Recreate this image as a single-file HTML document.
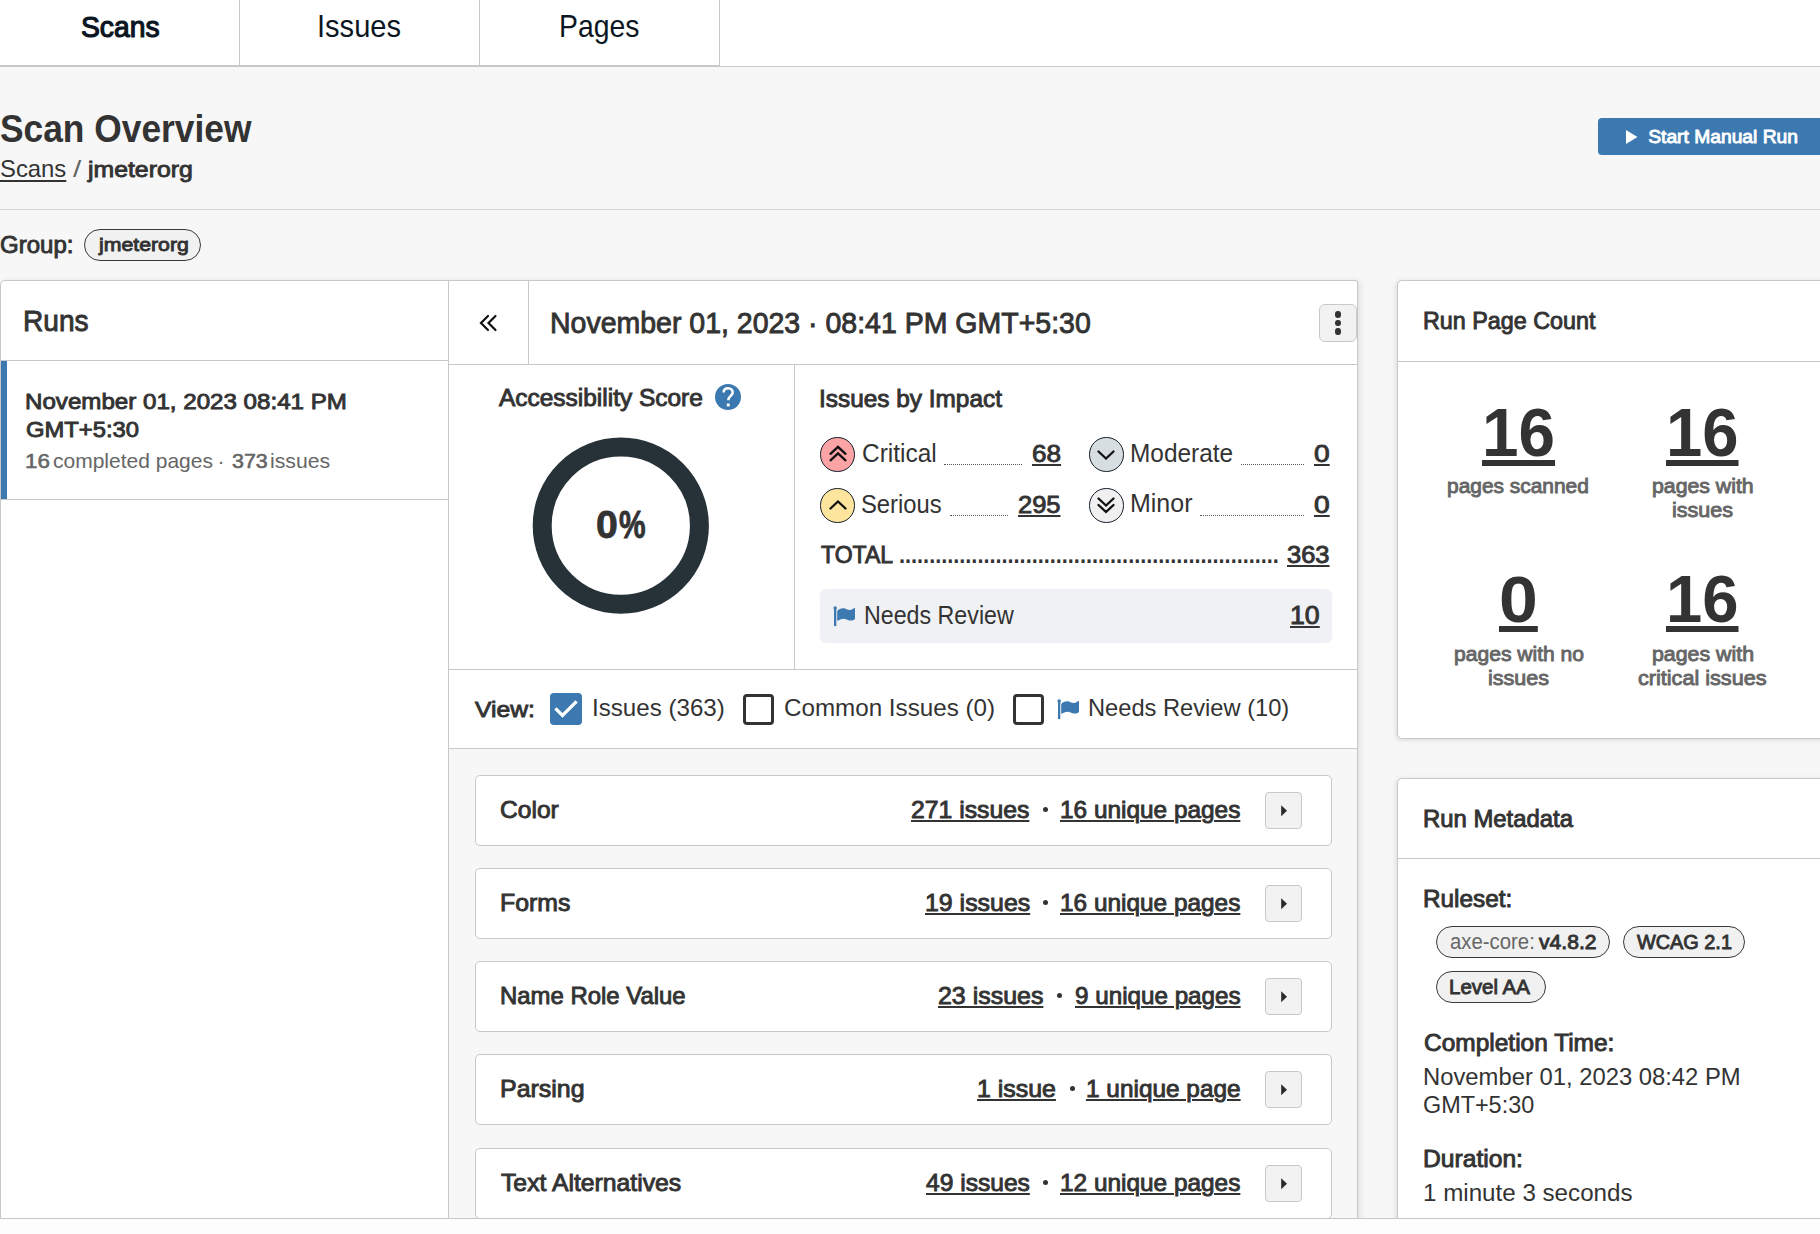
<!DOCTYPE html>
<html><head><meta charset="utf-8"><title>Scan Overview</title>
<style>
html,body{margin:0;padding:0;}
body{width:1820px;height:1234px;overflow:hidden;position:relative;background:#f7f7f7;font-family:'Liberation Sans',sans-serif;}
</style></head><body>
<div style="position:absolute;left:0px;top:0px;width:1820px;height:66px;background:#fff;border-bottom:1px solid #c8c8c8"></div>
<div style="position:absolute;left:0px;top:65px;width:720px;height:1px;background:#c8c8c8"></div>
<div style="position:absolute;left:239px;top:0px;width:1px;height:65px;background:#c8c8c8"></div>
<div style="position:absolute;left:479px;top:0px;width:1px;height:65px;background:#c8c8c8"></div>
<div style="position:absolute;left:719px;top:0px;width:1px;height:65px;background:#c8c8c8"></div>
<div style="position:absolute;left:1598px;top:118px;width:260px;height:36.5px;background:#3c79b0;border-radius:4px"></div>
<svg style="position:absolute;left:0;top:0" width="1820" height="1234"><polygon points="1626,130 1637.5,137 1626,144" fill="#fff"/></svg>
<div style="position:absolute;left:0px;top:209px;width:1820px;height:1px;background:#d4d4d4"></div>
<div style="position:absolute;left:84px;top:229px;width:117px;height:32px;box-sizing:border-box;border:1.5px solid #3a3a3a;border-radius:16px;background:#f1f1f1"></div>
<div style="position:absolute;left:0px;top:280px;width:1358px;height:1000px;box-sizing:border-box;background:#fff;border:1px solid #c8c8c8;border-radius:5px 2px 5px 5px;box-shadow:2px 1px 6px rgba(0,0,0,.10)"></div>
<div style="position:absolute;left:448px;top:281px;width:1px;height:960px;background:#c8c8c8"></div>
<div style="position:absolute;left:1px;top:360px;width:447px;height:1px;background:#c8c8c8"></div>
<div style="position:absolute;left:1px;top:361px;width:6px;height:138px;background:#3c79b0"></div>
<div style="position:absolute;left:1px;top:499px;width:447px;height:1px;background:#c8c8c8"></div>
<div style="position:absolute;left:528px;top:281px;width:1px;height:83px;background:#c8c8c8"></div>
<div style="position:absolute;left:449px;top:364px;width:908px;height:1px;background:#c8c8c8"></div>
<svg style="position:absolute;left:478px;top:313px" width="20" height="20" viewBox="0 0 20 20"><path d="M10 3 L3 10 L10 17 M17.5 3 L10.5 10 L17.5 17" fill="none" stroke="#111" stroke-width="2.2" stroke-linecap="round" stroke-linejoin="miter"/></svg>
<div style="position:absolute;left:1319px;top:304px;width:38px;height:38px;box-sizing:border-box;background:#f2f2f2;border:1px solid #c8c8c8;border-radius:6px"></div>
<div style="position:absolute;left:1335px;top:311.2px;width:6px;height:6.5px;border-radius:45%;background:#333"></div>
<div style="position:absolute;left:1335px;top:319.7px;width:6px;height:6.5px;border-radius:45%;background:#333"></div>
<div style="position:absolute;left:1335px;top:328.2px;width:6px;height:6.5px;border-radius:45%;background:#333"></div>
<div style="position:absolute;left:794px;top:365px;width:1px;height:304px;background:#c8c8c8"></div>
<div style="position:absolute;left:449px;top:669px;width:908px;height:1px;background:#c8c8c8"></div>
<div style="position:absolute;left:715px;top:384px;width:26px;height:26px;border-radius:50%;background:#3c79b0"></div>
<svg style="position:absolute;left:0;top:0" width="1820" height="1234"><path d="M723.6 392.6 C723.6 389.6 725.6 388.3 728.1 388.3 C730.8 388.3 732.7 390.1 732.7 392.5 C732.7 395.6 728.3 396.4 728.3 400.2" fill="none" stroke="#fff" stroke-width="2.5"/><rect x="726.8" y="403.5" width="2.9" height="2.9" fill="#fff"/></svg>
<svg style="position:absolute;left:0;top:0" width="1820" height="1234"><circle cx="620.8" cy="525.7" r="78.6" fill="none" stroke="#263238" stroke-width="19"/></svg>
<div style="position:absolute;left:820.2px;top:437.09999999999997px;width:34.6px;height:34.6px;box-sizing:border-box;border-radius:50%;background:#fba3a5;border:1.6px solid #16202a"></div>
<svg style="position:absolute;left:825.5px;top:442.4px" width="24" height="24" viewBox="-12 -12 24 24"><path transform="translate(0 -0.7)" d="M-7.5 0.5 L0 -6.5 L7.5 0.5 M-7.5 7 L0 0 L7.5 7" fill="none" stroke="#111" stroke-width="2.3" stroke-linecap="round"/></svg>
<div style="position:absolute;left:820.2px;top:488.09999999999997px;width:34.6px;height:34.6px;box-sizing:border-box;border-radius:50%;background:#fde59e;border:1.6px solid #16202a"></div>
<svg style="position:absolute;left:825.5px;top:493.4px" width="24" height="24" viewBox="-12 -12 24 24"><path transform="translate(0 0)" d="M-7.5 3.5 L0 -3.5 L7.5 3.5" fill="none" stroke="#111" stroke-width="2.3" stroke-linecap="round"/></svg>
<div style="position:absolute;left:1089.0px;top:437.2px;width:34.6px;height:34.6px;box-sizing:border-box;border-radius:50%;background:#d6dee2;border:1.6px solid #16202a"></div>
<svg style="position:absolute;left:1094.3px;top:442.5px" width="24" height="24" viewBox="-12 -12 24 24"><path transform="translate(0 0)" d="M-7.5 -3.5 L0 3.5 L7.5 -3.5" fill="none" stroke="#111" stroke-width="2.3" stroke-linecap="round"/></svg>
<div style="position:absolute;left:1089.0px;top:488.09999999999997px;width:34.6px;height:34.6px;box-sizing:border-box;border-radius:50%;background:#f0f0f0;border:1.6px solid #16202a"></div>
<svg style="position:absolute;left:1094.3px;top:493.4px" width="24" height="24" viewBox="-12 -12 24 24"><path transform="translate(0 0.5)" d="M-7.5 -7 L0 0 L7.5 -7 M-7.5 -0.5 L0 6.5 L7.5 -0.5" fill="none" stroke="#111" stroke-width="2.3" stroke-linecap="round"/></svg>
<div style="position:absolute;left:944px;top:464px;width:78px;height:1px;border-top:1.5px dotted #555;height:0"></div>
<div style="position:absolute;left:950px;top:515px;width:58px;height:1px;border-top:1.5px dotted #555;height:0"></div>
<div style="position:absolute;left:1241px;top:464px;width:63px;height:1px;border-top:1.5px dotted #555;height:0"></div>
<div style="position:absolute;left:1200px;top:515px;width:104px;height:1px;border-top:1.5px dotted #555;height:0"></div>
<div style="position:absolute;left:820px;top:589px;width:512px;height:54px;background:#f0f1f4;border-radius:6px"></div>
<svg style="position:absolute;left:0px;top:0px;overflow:visible" width="1" height="1"><g fill="#3c79b0"><rect x="834" y="607.5" width="2.3" height="18.6"/><circle cx="835.15" cy="607.9" r="1.7"/><path d="M837.2 611 C839 609 841 608.2 843.5 608.3 C846 608.5 847.5 610.2 850 610 C852 609.8 853.5 608.2 855 608 L855 619 C853.5 620.5 851.5 620.8 849.5 620.5 C847 620 846 618.8 843.5 618.8 C841 618.8 839.5 620.3 837.2 620.8 Z"/></g></svg>
<div style="position:absolute;left:449px;top:748px;width:908px;height:1px;background:#c8c8c8"></div>
<div style="position:absolute;left:550.4px;top:693.3px;width:31.5px;height:31.5px;border-radius:4px;background:#3c79b0"></div>
<svg style="position:absolute;left:550px;top:693px" width="32" height="32" viewBox="0 0 32 32"><path d="M5.4 15.3 L12.5 22.4 L26.6 8.3" fill="none" stroke="#fff" stroke-width="3.3"/></svg>
<div style="position:absolute;left:743px;top:694px;width:31px;height:31px;box-sizing:border-box;border:3px solid #333;border-radius:4px;background:#fff"></div>
<div style="position:absolute;left:1013px;top:694px;width:31px;height:31px;box-sizing:border-box;border:3px solid #333;border-radius:4px;background:#fff"></div>
<svg style="position:absolute;left:224.2px;top:93.2px;overflow:visible" width="1" height="1"><g fill="#3c79b0"><rect x="834" y="607.5" width="2.3" height="18.6"/><circle cx="835.15" cy="607.9" r="1.7"/><path d="M837.2 611 C839 609 841 608.2 843.5 608.3 C846 608.5 847.5 610.2 850 610 C852 609.8 853.5 608.2 855 608 L855 619 C853.5 620.5 851.5 620.8 849.5 620.5 C847 620 846 618.8 843.5 618.8 C841 618.8 839.5 620.3 837.2 620.8 Z"/></g></svg>
<div style="position:absolute;left:449px;top:749px;width:908px;height:520px;background:#f7f7f7"></div>
<div style="position:absolute;left:475px;top:775px;width:857px;height:71px;box-sizing:border-box;background:#fff;border:1px solid #c8c8c8;border-radius:5px"></div>
<div style="position:absolute;left:1043.0px;top:806.5px;width:5px;height:5px;border-radius:50%;background:#333"></div>
<div style="position:absolute;left:1265px;top:792px;width:37px;height:37px;box-sizing:border-box;background:#f2f2f2;border:1px solid #c8c8c8;border-radius:4px"></div>
<svg style="position:absolute;left:1277px;top:804px" width="14" height="14" viewBox="0 0 14 14"><polygon points="4.2,1.3 10,6.8 4.2,12.3" fill="#2a2a2a"/></svg>
<div style="position:absolute;left:475px;top:868px;width:857px;height:71px;box-sizing:border-box;background:#fff;border:1px solid #c8c8c8;border-radius:5px"></div>
<div style="position:absolute;left:1043.0px;top:899.5px;width:5px;height:5px;border-radius:50%;background:#333"></div>
<div style="position:absolute;left:1265px;top:885px;width:37px;height:37px;box-sizing:border-box;background:#f2f2f2;border:1px solid #c8c8c8;border-radius:4px"></div>
<svg style="position:absolute;left:1277px;top:897px" width="14" height="14" viewBox="0 0 14 14"><polygon points="4.2,1.3 10,6.8 4.2,12.3" fill="#2a2a2a"/></svg>
<div style="position:absolute;left:475px;top:961px;width:857px;height:71px;box-sizing:border-box;background:#fff;border:1px solid #c8c8c8;border-radius:5px"></div>
<div style="position:absolute;left:1056.5px;top:992.5px;width:5px;height:5px;border-radius:50%;background:#333"></div>
<div style="position:absolute;left:1265px;top:978px;width:37px;height:37px;box-sizing:border-box;background:#f2f2f2;border:1px solid #c8c8c8;border-radius:4px"></div>
<svg style="position:absolute;left:1277px;top:990px" width="14" height="14" viewBox="0 0 14 14"><polygon points="4.2,1.3 10,6.8 4.2,12.3" fill="#2a2a2a"/></svg>
<div style="position:absolute;left:475px;top:1054px;width:857px;height:71px;box-sizing:border-box;background:#fff;border:1px solid #c8c8c8;border-radius:5px"></div>
<div style="position:absolute;left:1069.5px;top:1085.5px;width:5px;height:5px;border-radius:50%;background:#333"></div>
<div style="position:absolute;left:1265px;top:1071px;width:37px;height:37px;box-sizing:border-box;background:#f2f2f2;border:1px solid #c8c8c8;border-radius:4px"></div>
<svg style="position:absolute;left:1277px;top:1083px" width="14" height="14" viewBox="0 0 14 14"><polygon points="4.2,1.3 10,6.8 4.2,12.3" fill="#2a2a2a"/></svg>
<div style="position:absolute;left:475px;top:1148px;width:857px;height:71px;box-sizing:border-box;background:#fff;border:1px solid #c8c8c8;border-radius:5px"></div>
<div style="position:absolute;left:1043.0px;top:1179.5px;width:5px;height:5px;border-radius:50%;background:#333"></div>
<div style="position:absolute;left:1265px;top:1165px;width:37px;height:37px;box-sizing:border-box;background:#f2f2f2;border:1px solid #c8c8c8;border-radius:4px"></div>
<svg style="position:absolute;left:1277px;top:1177px" width="14" height="14" viewBox="0 0 14 14"><polygon points="4.2,1.3 10,6.8 4.2,12.3" fill="#2a2a2a"/></svg>
<div style="position:absolute;left:1397px;top:280px;width:500px;height:459px;box-sizing:border-box;background:#fff;border:1px solid #c8c8c8;border-radius:5px;box-shadow:-1px 1px 5px rgba(0,0,0,.12)"></div>
<div style="position:absolute;left:1398px;top:361px;width:430px;height:1px;background:#c8c8c8"></div>
<div style="position:absolute;left:1397px;top:778px;width:500px;height:600px;box-sizing:border-box;background:#fff;border:1px solid #c8c8c8;border-radius:5px;box-shadow:-1px 1px 5px rgba(0,0,0,.12)"></div>
<div style="position:absolute;left:1398px;top:858px;width:430px;height:1px;background:#c8c8c8"></div>
<div style="position:absolute;left:1436px;top:926px;width:174px;height:32px;box-sizing:border-box;border:1.5px solid #3a3a3a;border-radius:16px;background:#f1f1f1"></div>
<div style="position:absolute;left:1623px;top:926px;width:122px;height:32px;box-sizing:border-box;border:1.5px solid #3a3a3a;border-radius:16px;background:#f1f1f1"></div>
<div style="position:absolute;left:1436px;top:971px;width:110px;height:32px;box-sizing:border-box;border:1.5px solid #3a3a3a;border-radius:16px;background:#f1f1f1"></div>
<div style="position:absolute;left:80.52px;top:13.00px;-webkit-text-stroke:1.2px #0b1622;font:400 29.0px/29.0px 'Liberation Sans',sans-serif;color:#0b1622;white-space:pre;transform:scaleX(0.9748);transform-origin:0 0;">Scans</div>
<div style="position:absolute;left:317.33px;top:11.25px;font:400 30.5px/30.5px 'Liberation Sans',sans-serif;color:#0b1622;white-space:pre;transform:scaleX(0.9527);transform-origin:0 0;">Issues</div>
<div style="position:absolute;left:558.58px;top:11.25px;font:400 30.5px/30.5px 'Liberation Sans',sans-serif;color:#0b1622;white-space:pre;transform:scaleX(0.9297);transform-origin:0 0;">Pages</div>
<div style="position:absolute;left:0.45px;top:108.68px;font:700 39.25px/39.25px 'Liberation Sans',sans-serif;color:#333;white-space:pre;transform:scaleX(0.9003);transform-origin:0 0;">Scan Overview</div>
<div style="position:absolute;left:-0.49px;top:156.50px;font:400 24.0px/24.0px 'Liberation Sans',sans-serif;color:#333;white-space:pre;transform:scaleX(0.9938);transform-origin:0 0;text-decoration:underline;text-decoration-thickness:1.5px;text-underline-offset:3px">Scans</div>
<div style="position:absolute;left:72.50px;top:156.50px;font:400 24.0px/24.0px 'Liberation Sans',sans-serif;color:#666;white-space:pre;transform:scaleX(1.2388);transform-origin:0 0;">/</div>
<div style="position:absolute;left:88.05px;top:157.62px;-webkit-text-stroke:0.9px #333;font:400 22.75px/22.75px 'Liberation Sans',sans-serif;color:#333;white-space:pre;transform:scaleX(1.0899);transform-origin:0 0;">jmeterorg</div>
<div style="position:absolute;left:1648.20px;top:126.78px;-webkit-text-stroke:0.9px #fff;font:400 19.25px/19.25px 'Liberation Sans',sans-serif;color:#fff;white-space:pre;">Start Manual Run</div>
<div style="position:absolute;left:-0.32px;top:233.95px;-webkit-text-stroke:0.9px #333;font:400 23.5px/23.5px 'Liberation Sans',sans-serif;color:#333;white-space:pre;transform:scaleX(1.0217);transform-origin:0 0;">Group:</div>
<div style="position:absolute;left:99.15px;top:235.28px;-webkit-text-stroke:0.9px #333;font:400 19.25px/19.25px 'Liberation Sans',sans-serif;color:#333;white-space:pre;transform:scaleX(1.1042);transform-origin:0 0;">jmeterorg</div>
<div style="position:absolute;left:22.81px;top:306.88px;-webkit-text-stroke:0.9px #333;font:400 29.25px/29.25px 'Liberation Sans',sans-serif;color:#333;white-space:pre;transform:scaleX(0.9603);transform-origin:0 0;">Runs</div>
<div style="position:absolute;left:25.09px;top:389.62px;-webkit-text-stroke:0.9px #333;font:400 22.75px/22.75px 'Liberation Sans',sans-serif;color:#333;white-space:pre;transform:scaleX(1.0605);transform-origin:0 0;">November 01, 2023 08:41 PM</div>
<div style="position:absolute;left:25.85px;top:417.93px;-webkit-text-stroke:0.9px #333;font:400 22.75px/22.75px 'Liberation Sans',sans-serif;color:#333;white-space:pre;transform:scaleX(1.0456);transform-origin:0 0;">GMT+5:30</div>
<div style="position:absolute;left:25.32px;top:450.50px;-webkit-text-stroke:0.9px #666;font:400 20.0px/20.0px 'Liberation Sans',sans-serif;color:#666;white-space:pre;transform:scaleX(1.1193);transform-origin:0 0;-webkit-text-stroke-width:0.6px">16</div>
<div style="position:absolute;left:53.00px;top:449.50px;font:400 21.0px/21.0px 'Liberation Sans',sans-serif;color:#666;white-space:pre;">completed pages</div>
<div style="position:absolute;left:217.55px;top:449.50px;font:400 21.0px/21.0px 'Liberation Sans',sans-serif;color:#666;white-space:pre;">·</div>
<div style="position:absolute;left:231.75px;top:450.50px;-webkit-text-stroke:0.9px #666;font:400 20.0px/20.0px 'Liberation Sans',sans-serif;color:#666;white-space:pre;transform:scaleX(1.0708);transform-origin:0 0;-webkit-text-stroke-width:0.6px">373</div>
<div style="position:absolute;left:270.28px;top:449.50px;font:400 21.0px/21.0px 'Liberation Sans',sans-serif;color:#666;white-space:pre;transform:scaleX(1.0118);transform-origin:0 0;">issues</div>
<div style="position:absolute;left:550.47px;top:308.88px;-webkit-text-stroke:0.9px #333;font:400 29.25px/29.25px 'Liberation Sans',sans-serif;color:#333;white-space:pre;transform:scaleX(0.9739);transform-origin:0 0;">November 01, 2023 · 08:41 PM GMT+5:30</div>
<div style="position:absolute;left:499.20px;top:387.20px;-webkit-text-stroke:0.9px #333;font:400 23.0px/23.0px 'Liberation Sans',sans-serif;color:#333;white-space:pre;transform:scaleX(1.0633);transform-origin:0 0;">Accessibility Score</div>
<div style="position:absolute;left:596.27px;top:505.15px;font:700 39.5px/39.5px 'Liberation Sans',sans-serif;color:#333;white-space:pre;transform:scaleX(0.9931);transform-origin:0 0;-webkit-text-stroke:0.8px #333">0</div>
<div style="position:absolute;left:619.23px;top:505.15px;font:700 39.5px/39.5px 'Liberation Sans',sans-serif;color:#333;white-space:pre;transform:scaleX(0.7571);transform-origin:0 0;-webkit-text-stroke:0.9px #333">%</div>
<div style="position:absolute;left:818.82px;top:387.65px;-webkit-text-stroke:0.9px #333;font:400 23.5px/23.5px 'Liberation Sans',sans-serif;color:#333;white-space:pre;transform:scaleX(1.0374);transform-origin:0 0;">Issues by Impact</div>
<div style="position:absolute;left:861.85px;top:440.75px;font:400 25.5px/25.5px 'Liberation Sans',sans-serif;color:#333;white-space:pre;transform:scaleX(0.9593);transform-origin:0 0;">Critical</div>
<div style="position:absolute;left:1031.71px;top:441.88px;-webkit-text-stroke:0.9px #333;font:400 24.25px/24.25px 'Liberation Sans',sans-serif;color:#333;white-space:pre;transform:scaleX(1.0772);transform-origin:0 0;text-decoration:underline;text-decoration-thickness:2px;text-underline-offset:2px">68</div>
<div style="position:absolute;left:861.37px;top:491.55px;font:400 25.5px/25.5px 'Liberation Sans',sans-serif;color:#333;white-space:pre;transform:scaleX(0.9324);transform-origin:0 0;">Serious</div>
<div style="position:absolute;left:1018.24px;top:492.67px;-webkit-text-stroke:0.9px #333;font:400 24.25px/24.25px 'Liberation Sans',sans-serif;color:#333;white-space:pre;transform:scaleX(1.0503);transform-origin:0 0;text-decoration:underline;text-decoration-thickness:2px;text-underline-offset:2px">295</div>
<div style="position:absolute;left:1129.69px;top:440.75px;font:400 25.5px/25.5px 'Liberation Sans',sans-serif;color:#333;white-space:pre;transform:scaleX(0.9566);transform-origin:0 0;">Moderate</div>
<div style="position:absolute;left:1313.95px;top:441.88px;-webkit-text-stroke:0.9px #333;font:400 24.25px/24.25px 'Liberation Sans',sans-serif;color:#333;white-space:pre;transform:scaleX(1.1624);transform-origin:0 0;text-decoration:underline;text-decoration-thickness:2px;text-underline-offset:2px">0</div>
<div style="position:absolute;left:1129.64px;top:491.45px;font:400 25.5px/25.5px 'Liberation Sans',sans-serif;color:#333;white-space:pre;transform:scaleX(0.9793);transform-origin:0 0;">Minor</div>
<div style="position:absolute;left:1313.95px;top:492.58px;-webkit-text-stroke:0.9px #333;font:400 24.25px/24.25px 'Liberation Sans',sans-serif;color:#333;white-space:pre;transform:scaleX(1.1624);transform-origin:0 0;text-decoration:underline;text-decoration-thickness:2px;text-underline-offset:2px">0</div>
<div style="position:absolute;left:820.51px;top:544.35px;-webkit-text-stroke:0.9px #333;font:400 23.5px/23.5px 'Liberation Sans',sans-serif;color:#333;white-space:pre;transform:scaleX(0.9793);transform-origin:0 0;">TOTAL</div>
<div style="position:absolute;left:898.60px;top:542.92px;font:700 24.75px/24.75px 'Liberation Sans',sans-serif;color:#333;white-space:pre;transform:scaleX(0.8769);transform-origin:0 0;">...............................................................</div>
<div style="position:absolute;left:1287.13px;top:544.05px;-webkit-text-stroke:0.9px #333;font:400 23.5px/23.5px 'Liberation Sans',sans-serif;color:#333;white-space:pre;transform:scaleX(1.0844);transform-origin:0 0;text-decoration:underline;text-decoration-thickness:2px;text-underline-offset:2px">363</div>
<div style="position:absolute;left:863.79px;top:602.38px;font:400 26.25px/26.25px 'Liberation Sans',sans-serif;color:#333;white-space:pre;transform:scaleX(0.8847);transform-origin:0 0;">Needs Review</div>
<div style="position:absolute;left:1289.97px;top:603.00px;-webkit-text-stroke:0.9px #333;font:400 25.0px/25.0px 'Liberation Sans',sans-serif;color:#333;white-space:pre;transform:scaleX(1.0678);transform-origin:0 0;text-decoration:underline;text-decoration-thickness:2px;text-underline-offset:2px">10</div>
<div style="position:absolute;left:474.89px;top:697.52px;-webkit-text-stroke:0.9px #333;font:400 22.75px/22.75px 'Liberation Sans',sans-serif;color:#333;white-space:pre;transform:scaleX(1.0829);transform-origin:0 0;">View:</div>
<div style="position:absolute;left:592.19px;top:696.40px;font:400 24.0px/24.0px 'Liberation Sans',sans-serif;color:#333;white-space:pre;transform:scaleX(1.0057);transform-origin:0 0;">Issues (363)</div>
<div style="position:absolute;left:784.19px;top:696.40px;font:400 24.0px/24.0px 'Liberation Sans',sans-serif;color:#333;white-space:pre;transform:scaleX(1.0077);transform-origin:0 0;">Common Issues (0)</div>
<div style="position:absolute;left:1088.13px;top:696.40px;font:400 24.0px/24.0px 'Liberation Sans',sans-serif;color:#333;white-space:pre;transform:scaleX(0.9861);transform-origin:0 0;">Needs Review (10)</div>
<div style="position:absolute;left:500.27px;top:798.00px;-webkit-text-stroke:0.9px #333;font:400 24.0px/24.0px 'Liberation Sans',sans-serif;color:#333;white-space:pre;transform:scaleX(1.0240);transform-origin:0 0;">Color</div>
<div style="position:absolute;left:911.46px;top:798.00px;-webkit-text-stroke:0.9px #333;font:400 24.0px/24.0px 'Liberation Sans',sans-serif;color:#333;white-space:pre;transform:scaleX(1.0316);transform-origin:0 0;text-decoration:underline;text-decoration-thickness:2px;text-underline-offset:2px">271 issues</div>
<div style="position:absolute;left:1060.17px;top:798.00px;-webkit-text-stroke:0.9px #333;font:400 24.0px/24.0px 'Liberation Sans',sans-serif;color:#333;white-space:pre;transform:scaleX(1.0161);transform-origin:0 0;text-decoration:underline;text-decoration-thickness:2px;text-underline-offset:2px">16 unique pages</div>
<div style="position:absolute;left:499.54px;top:891.00px;-webkit-text-stroke:0.9px #333;font:400 24.0px/24.0px 'Liberation Sans',sans-serif;color:#333;white-space:pre;transform:scaleX(1.0338);transform-origin:0 0;">Forms</div>
<div style="position:absolute;left:924.63px;top:891.00px;-webkit-text-stroke:0.9px #333;font:400 24.0px/24.0px 'Liberation Sans',sans-serif;color:#333;white-space:pre;transform:scaleX(1.0375);transform-origin:0 0;text-decoration:underline;text-decoration-thickness:2px;text-underline-offset:2px">19 issues</div>
<div style="position:absolute;left:1060.17px;top:891.00px;-webkit-text-stroke:0.9px #333;font:400 24.0px/24.0px 'Liberation Sans',sans-serif;color:#333;white-space:pre;transform:scaleX(1.0161);transform-origin:0 0;text-decoration:underline;text-decoration-thickness:2px;text-underline-offset:2px">16 unique pages</div>
<div style="position:absolute;left:499.61px;top:984.00px;-webkit-text-stroke:0.9px #333;font:400 24.0px/24.0px 'Liberation Sans',sans-serif;color:#333;white-space:pre;transform:scaleX(0.9964);transform-origin:0 0;">Name Role Value</div>
<div style="position:absolute;left:938.45px;top:984.00px;-webkit-text-stroke:0.9px #333;font:400 24.0px/24.0px 'Liberation Sans',sans-serif;color:#333;white-space:pre;transform:scaleX(1.0393);transform-origin:0 0;text-decoration:underline;text-decoration-thickness:2px;text-underline-offset:2px">23 issues</div>
<div style="position:absolute;left:1074.89px;top:984.00px;-webkit-text-stroke:0.9px #333;font:400 24.0px/24.0px 'Liberation Sans',sans-serif;color:#333;white-space:pre;transform:scaleX(1.0090);transform-origin:0 0;text-decoration:underline;text-decoration-thickness:2px;text-underline-offset:2px">9 unique pages</div>
<div style="position:absolute;left:499.53px;top:1077.00px;-webkit-text-stroke:0.9px #333;font:400 24.0px/24.0px 'Liberation Sans',sans-serif;color:#333;white-space:pre;transform:scaleX(1.0394);transform-origin:0 0;">Parsing</div>
<div style="position:absolute;left:977.13px;top:1077.00px;-webkit-text-stroke:0.9px #333;font:400 24.0px/24.0px 'Liberation Sans',sans-serif;color:#333;white-space:pre;transform:scaleX(1.0383);transform-origin:0 0;text-decoration:underline;text-decoration-thickness:2px;text-underline-offset:2px">1 issue</div>
<div style="position:absolute;left:1086.17px;top:1077.00px;-webkit-text-stroke:0.9px #333;font:400 24.0px/24.0px 'Liberation Sans',sans-serif;color:#333;white-space:pre;transform:scaleX(1.0161);transform-origin:0 0;text-decoration:underline;text-decoration-thickness:2px;text-underline-offset:2px">1 unique page</div>
<div style="position:absolute;left:500.98px;top:1171.00px;-webkit-text-stroke:0.9px #333;font:400 24.0px/24.0px 'Liberation Sans',sans-serif;color:#333;white-space:pre;transform:scaleX(1.0310);transform-origin:0 0;">Text Alternatives</div>
<div style="position:absolute;left:925.99px;top:1171.00px;-webkit-text-stroke:0.9px #333;font:400 24.0px/24.0px 'Liberation Sans',sans-serif;color:#333;white-space:pre;transform:scaleX(1.0241);transform-origin:0 0;text-decoration:underline;text-decoration-thickness:2px;text-underline-offset:2px">49 issues</div>
<div style="position:absolute;left:1060.17px;top:1171.00px;-webkit-text-stroke:0.9px #333;font:400 24.0px/24.0px 'Liberation Sans',sans-serif;color:#333;white-space:pre;transform:scaleX(1.0161);transform-origin:0 0;text-decoration:underline;text-decoration-thickness:2px;text-underline-offset:2px">12 unique pages</div>
<div style="position:absolute;left:1422.91px;top:310.35px;-webkit-text-stroke:0.9px #333;font:400 23.5px/23.5px 'Liberation Sans',sans-serif;color:#333;white-space:pre;transform:scaleX(0.9928);transform-origin:0 0;">Run Page Count</div>
<div style="position:absolute;left:1481.60px;top:398.27px;font:700 68.25px/68.25px 'Liberation Sans',sans-serif;color:#333;white-space:pre;transform:scaleX(0.9621);transform-origin:0 0;text-decoration:underline;text-decoration-thickness:6px;text-underline-offset:4px">16</div>
<div style="position:absolute;left:1665.93px;top:398.27px;font:700 68.25px/68.25px 'Liberation Sans',sans-serif;color:#333;white-space:pre;transform:scaleX(0.9550);transform-origin:0 0;text-decoration:underline;text-decoration-thickness:6px;text-underline-offset:4px">16</div>
<div style="position:absolute;left:1498.82px;top:567.45px;font:700 65.5px/65.5px 'Liberation Sans',sans-serif;color:#333;white-space:pre;transform:scaleX(1.0654);transform-origin:0 0;text-decoration:underline;text-decoration-thickness:6px;text-underline-offset:4px">0</div>
<div style="position:absolute;left:1665.93px;top:566.33px;font:700 66.75px/66.75px 'Liberation Sans',sans-serif;color:#333;white-space:pre;transform:scaleX(0.9764);transform-origin:0 0;text-decoration:underline;text-decoration-thickness:6px;text-underline-offset:4px">16</div>
<div style="position:absolute;left:1447.49px;top:475.82px;-webkit-text-stroke:0.9px #666;font:400 20.75px/20.75px 'Liberation Sans',sans-serif;color:#666;white-space:pre;transform:scaleX(1.0079);transform-origin:0 0;">pages scanned</div>
<div style="position:absolute;left:1651.77px;top:475.82px;-webkit-text-stroke:0.9px #666;font:400 20.75px/20.75px 'Liberation Sans',sans-serif;color:#666;white-space:pre;transform:scaleX(1.0242);transform-origin:0 0;">pages with</div>
<div style="position:absolute;left:1671.95px;top:499.62px;-webkit-text-stroke:0.9px #666;font:400 20.75px/20.75px 'Liberation Sans',sans-serif;color:#666;white-space:pre;transform:scaleX(1.0362);transform-origin:0 0;">issues</div>
<div style="position:absolute;left:1453.68px;top:643.83px;-webkit-text-stroke:0.9px #666;font:400 20.75px/20.75px 'Liberation Sans',sans-serif;color:#666;white-space:pre;transform:scaleX(1.0158);transform-origin:0 0;">pages with no</div>
<div style="position:absolute;left:1488.15px;top:667.62px;-webkit-text-stroke:0.9px #666;font:400 20.75px/20.75px 'Liberation Sans',sans-serif;color:#666;white-space:pre;transform:scaleX(1.0362);transform-origin:0 0;">issues</div>
<div style="position:absolute;left:1651.66px;top:643.83px;-webkit-text-stroke:0.9px #666;font:400 20.75px/20.75px 'Liberation Sans',sans-serif;color:#666;white-space:pre;transform:scaleX(1.0284);transform-origin:0 0;">pages with</div>
<div style="position:absolute;left:1638.17px;top:667.62px;-webkit-text-stroke:0.9px #666;font:400 20.75px/20.75px 'Liberation Sans',sans-serif;color:#666;white-space:pre;transform:scaleX(1.0418);transform-origin:0 0;">critical issues</div>
<div style="position:absolute;left:1422.87px;top:807.95px;-webkit-text-stroke:0.9px #333;font:400 23.5px/23.5px 'Liberation Sans',sans-serif;color:#333;white-space:pre;transform:scaleX(1.0161);transform-origin:0 0;">Run Metadata</div>
<div style="position:absolute;left:1422.83px;top:887.75px;-webkit-text-stroke:0.9px #333;font:400 23.5px/23.5px 'Liberation Sans',sans-serif;color:#333;white-space:pre;transform:scaleX(1.0343);transform-origin:0 0;">Ruleset:</div>
<div style="position:absolute;left:1449.84px;top:931.58px;font:400 21.25px/21.25px 'Liberation Sans',sans-serif;color:#666;white-space:pre;transform:scaleX(0.9571);transform-origin:0 0;">axe-core:</div>
<div style="position:absolute;left:1539.00px;top:932.08px;-webkit-text-stroke:0.9px #333;font:400 20.25px/20.25px 'Liberation Sans',sans-serif;color:#333;white-space:pre;transform:scaleX(1.0424);transform-origin:0 0;">v4.8.2</div>
<div style="position:absolute;left:1637.00px;top:932.08px;-webkit-text-stroke:0.9px #333;font:400 20.25px/20.25px 'Liberation Sans',sans-serif;color:#333;white-space:pre;transform:scaleX(0.9811);transform-origin:0 0;">WCAG 2.1</div>
<div style="position:absolute;left:1449.28px;top:976.98px;-webkit-text-stroke:0.9px #333;font:400 20.25px/20.25px 'Liberation Sans',sans-serif;color:#333;white-space:pre;transform:scaleX(1.0120);transform-origin:0 0;">Level AA</div>
<div style="position:absolute;left:1423.65px;top:1032.45px;-webkit-text-stroke:0.9px #333;font:400 23.5px/23.5px 'Liberation Sans',sans-serif;color:#333;white-space:pre;transform:scaleX(1.0414);transform-origin:0 0;">Completion Time:</div>
<div style="position:absolute;left:1422.58px;top:1065.12px;font:400 24.75px/24.75px 'Liberation Sans',sans-serif;color:#333;white-space:pre;transform:scaleX(0.9620);transform-origin:0 0;">November 01, 2023 08:42 PM</div>
<div style="position:absolute;left:1423.37px;top:1093.12px;font:400 24.75px/24.75px 'Liberation Sans',sans-serif;color:#333;white-space:pre;transform:scaleX(0.9450);transform-origin:0 0;">GMT+5:30</div>
<div style="position:absolute;left:1422.81px;top:1148.05px;-webkit-text-stroke:0.9px #333;font:400 23.5px/23.5px 'Liberation Sans',sans-serif;color:#333;white-space:pre;transform:scaleX(1.0479);transform-origin:0 0;">Duration:</div>
<div style="position:absolute;left:1423.24px;top:1180.83px;font:400 24.75px/24.75px 'Liberation Sans',sans-serif;color:#333;white-space:pre;transform:scaleX(0.9762);transform-origin:0 0;">1 minute 3 seconds</div>
<div style="position:absolute;left:0px;top:1218px;width:1820px;height:1px;background:#c8c8c8"></div>
<div style="position:absolute;left:0px;top:1219px;width:1820px;height:15px;background:#fdfdfd"></div>
</body></html>
